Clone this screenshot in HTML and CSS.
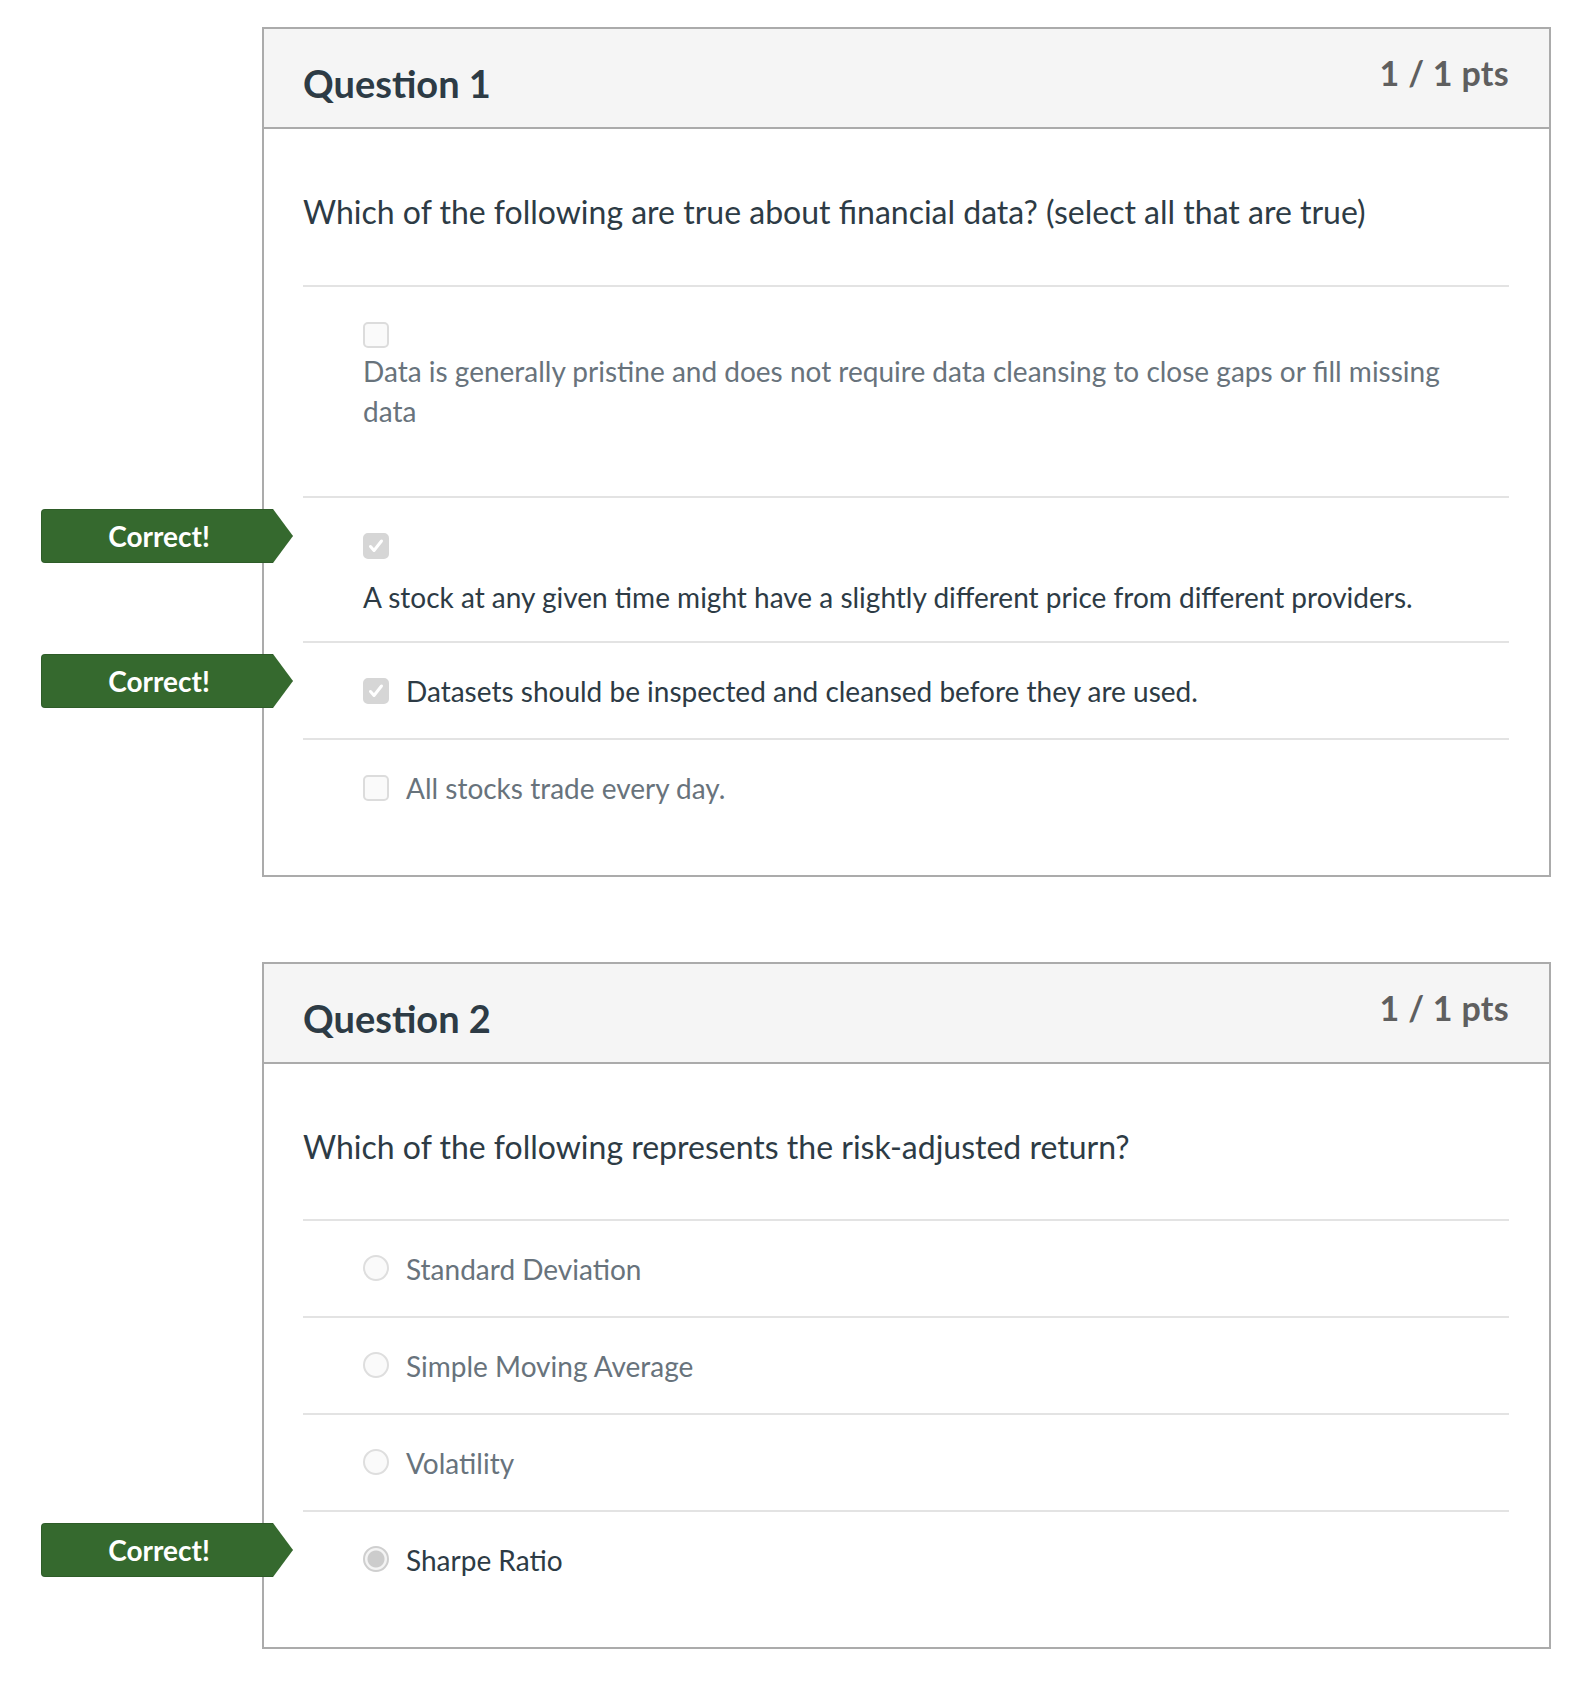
FILE: index.html
```html
<!DOCTYPE html>
<html lang="en">
<head>
<meta charset="utf-8">
<title>Quiz results</title>
<link rel="stylesheet" href="styles.css">
</head>
<body>
<main class="page">
  <section class="question">
    <header class="question__header">
      <h2 class="question__title">Question 1</h2>
      <span class="question__pts">1 / 1 pts</span>
    </header>
    <div class="question__body">
      <p class="question__text">Which of the following are true about financial data? (select all that are true)</p>
      <div class="answers">
        <div class="answer answer--stacked answer--wrapped">
          <span class="check"></span>
          <span class="answer__label">Data is generally pristine and does not require data cleansing to close gaps or fill missing data</span>
        </div>
        <div class="answer answer--stacked answer--selected">
          <span class="badge">Correct!</span>
          <span class="check check--on"><svg viewBox="0 0 26 26" width="26" height="26"><path d="M7.5 13.5 L11 17.5 L18.5 8" fill="none" stroke="#fff" stroke-width="3" stroke-linecap="round" stroke-linejoin="round"/></svg></span>
          <span class="answer__label">A stock at any given time might have a slightly different price from different providers.</span>
        </div>
        <div class="answer answer--selected">
          <span class="badge">Correct!</span>
          <span class="check check--on"><svg viewBox="0 0 26 26" width="26" height="26"><path d="M7.5 13.5 L11 17.5 L18.5 8" fill="none" stroke="#fff" stroke-width="3" stroke-linecap="round" stroke-linejoin="round"/></svg></span>
          <span class="answer__label">Datasets should be inspected and cleansed before they are used.</span>
        </div>
        <div class="answer">
          <span class="check"></span>
          <span class="answer__label">All stocks trade every day.</span>
        </div>
      </div>
    </div>
  </section>

  <section class="question question--radio">
    <header class="question__header">
      <h2 class="question__title">Question 2</h2>
      <span class="question__pts">1 / 1 pts</span>
    </header>
    <div class="question__body">
      <p class="question__text">Which of the following represents the risk-adjusted return?</p>
      <div class="answers">
        <div class="answer">
          <span class="radio"></span>
          <span class="answer__label">Standard Deviation</span>
        </div>
        <div class="answer">
          <span class="radio"></span>
          <span class="answer__label">Simple Moving Average</span>
        </div>
        <div class="answer">
          <span class="radio"></span>
          <span class="answer__label">Volatility</span>
        </div>
        <div class="answer answer--selected">
          <span class="badge">Correct!</span>
          <span class="radio radio--on"></span>
          <span class="answer__label">Sharpe Ratio</span>
        </div>
      </div>
    </div>
  </section>
</main>
</body>
</html>
```

FILE: styles.css
```css
* { box-sizing: border-box; }

html, body {
  margin: 0;
  padding: 0;
  background: #ffffff;
}

body {
  font-family: Lato, "Open Sans", "Liberation Sans", sans-serif;
  color: #2d3b45;
}

.page {
  padding: 27px 0 36px 262px;
}

.question {
  width: 1289px;
  border: 2px solid #ababab;
  background: #fff;
}

.question + .question {
  margin-top: 85px;
}

.question__header {
  display: flex;
  justify-content: space-between;
  align-items: flex-start;
  height: 100px;
  padding: 31px 40px 0 39px;
  background: #f5f5f5;
  border-bottom: 2px solid #ababab;
}

.question__title {
  margin: 0;
  font-size: 38px;
  font-weight: 700;
  line-height: 46px;
  color: #2d3b45;
}

.question__pts {
  margin-top: -8px;
  font-size: 34px;
  font-weight: 700;
  line-height: 41px;
  letter-spacing: 0.3px;
  color: #5f5f5f;
}

.question__body {
  padding: 60px 40px 40px 39px;
}

.question__text {
  margin: 0 0 50px;
  font-size: 32px;
  line-height: 46px;
  color: #2d3b45;
}

.question--radio .question__text {
  margin-bottom: 49px;
}

.answer {
  position: relative;
  display: flex;
  align-items: flex-start;
  gap: 17px;
  padding: 28px 0 27px 60px;
  border-top: 2px solid #e3e3e3;
  font-size: 28px;
  line-height: 40px;
  color: #68737c;
}

.answer--selected {
  color: #2d3b45;
}

.answer--stacked {
  flex-direction: column;
  gap: 0;
  padding-top: 35px;
  padding-bottom: 24px;
}

.answer--stacked .answer__label {
  margin-top: 18px;
}

.answer--wrapped {
  padding-bottom: 65px;
}

.answer--wrapped .answer__label {
  margin-top: 3px;
  padding-right: 60px;
}

.check {
  flex: none;
  display: block;
  width: 26px;
  height: 26px;
  margin-top: 7px;
  border: 2px solid #dcdcdc;
  border-radius: 5px;
  background: #fafafa;
}

.answer--stacked .check {
  margin-top: 0;
}

.check--on {
  border-color: #d6d6d6;
  background: #d6d6d6;
}

.check--on svg {
  display: block;
  margin: -2px;
}

.radio {
  flex: none;
  display: block;
  width: 26px;
  height: 26px;
  margin-top: 6px;
  border: 2px solid #dedede;
  border-radius: 50%;
  background: #fafafa;
}

.radio--on {
  border-color: #cfcfcf;
  background: radial-gradient(circle, #cccccc 0 8px, #f4f4f4 9px);
}

.badge {
  position: absolute;
  left: -262px;
  top: 11px;
  display: flex;
  align-items: center;
  justify-content: center;
  width: 252px;
  height: 54px;
  padding-right: 16px;
  border-radius: 4px 0 0 4px;
  background: #35692e;
  box-shadow: inset 0 0 0 1px rgba(0, 0, 0, 0.12);
  clip-path: polygon(0 0, 232px 0, 100% 50%, 232px 100%, 0 100%);
  color: #ffffff;
  font-size: 28px;
  font-weight: 700;
  line-height: 32px;
}
```
